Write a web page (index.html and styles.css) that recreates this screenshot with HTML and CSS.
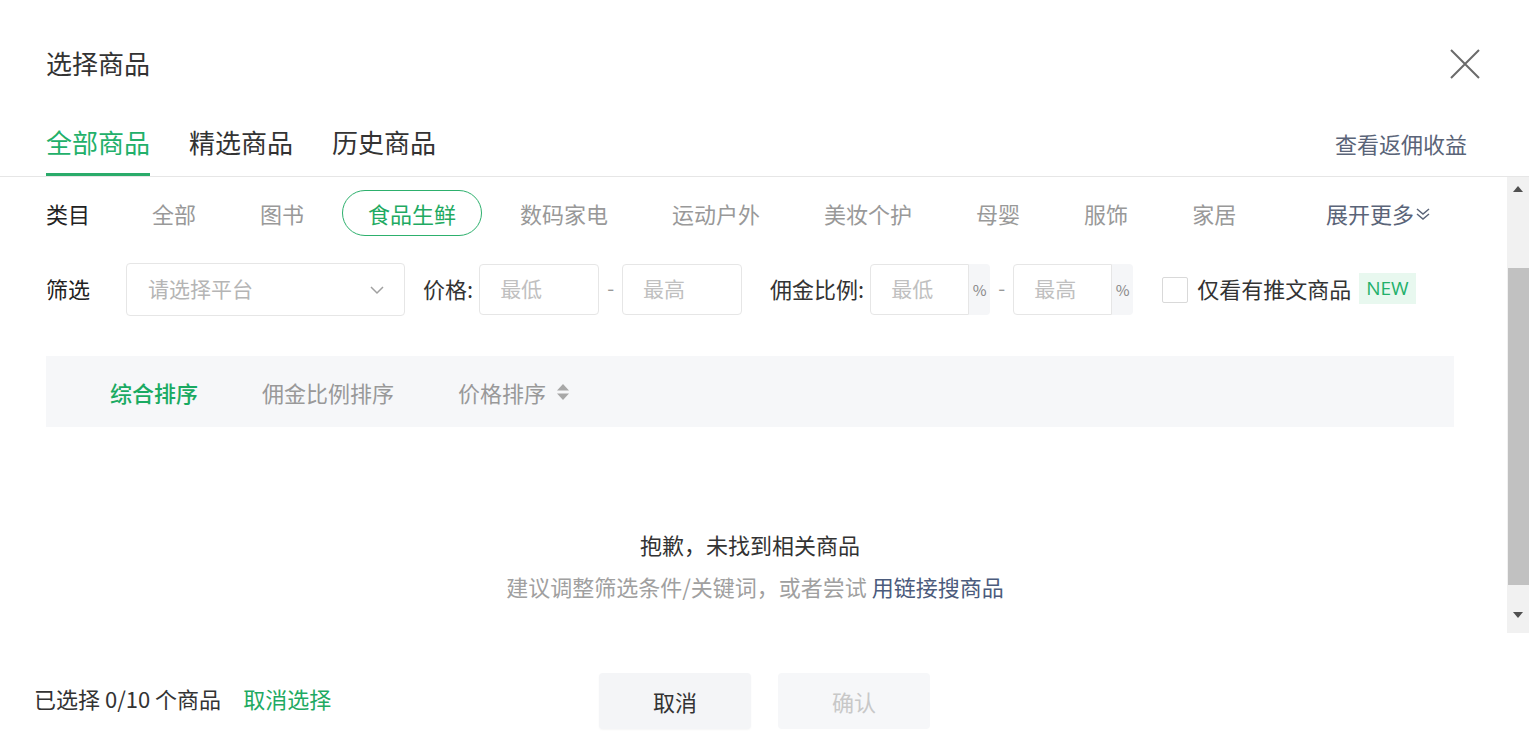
FILE: index.html
```html
<!DOCTYPE html>
<html lang="zh-CN">
<head>
  <meta charset="UTF-8" />
  <meta name="viewport" content="width=device-width, initial-scale=1.0" />
  <title>选择商品</title>
  <link rel="stylesheet" href="styles.css">
</head>
<body>
  <div class="dialog">
    <div class="dialog-header">
      <span class="dialog-title">选择商品</span>
      <button class="close-btn" aria-label="关闭">
        <svg width="30" height="30" viewBox="0 0 30 30">
          <path d="M1 1 L29 29 M29 1 L1 29" stroke="#6b6b6b" stroke-width="2" fill="none" />
        </svg>
      </button>
    </div>

    <div class="tabs">
      <span class="tab active">全部商品</span>
      <span class="tab">精选商品</span>
      <span class="tab">历史商品</span>
      <a class="earnings-link">查看返佣收益</a>
    </div>

    <div class="dialog-body">
      <div class="body-content">
        <div class="category-row">
          <span class="row-label">类目</span>
          <span class="cat-item">全部</span>
          <span class="cat-item">图书</span>
          <span class="cat-item active">食品生鲜</span>
          <span class="cat-item">数码家电</span>
          <span class="cat-item">运动户外</span>
          <span class="cat-item">美妆个护</span>
          <span class="cat-item">母婴</span>
          <span class="cat-item">服饰</span>
          <span class="cat-item">家居</span>
          <span class="expand-more">展开更多
            <svg width="18" height="14" viewBox="0 0 18 14">
              <path d="M3 2 L9 7 L15 2 M3 7 L9 12 L15 7" stroke="#5a6478" stroke-width="1.5" fill="none" />
            </svg>
          </span>
        </div>

        <div class="filter-row">
          <span class="row-label">筛选</span>
          <div class="select-box">
            <span class="placeholder">请选择平台</span>
            <svg width="14" height="10" viewBox="0 0 14 10">
              <path d="M1 2 L7 8 L13 2" stroke="#a0a0a0" stroke-width="1.5" fill="none" />
            </svg>
          </div>

          <span class="field-label price-label">价格:</span>
          <div class="range-input"><span class="placeholder">最低</span></div>
          <span class="dash">-</span>
          <div class="range-input"><span class="placeholder">最高</span></div>

          <span class="field-label rate-label">佣金比例:</span>
          <div class="rate-group">
            <div class="rate-input"><span class="placeholder">最低</span></div>
            <span class="percent">%</span>
          </div>
          <span class="dash">-</span>
          <div class="rate-group">
            <div class="rate-input"><span class="placeholder">最高</span></div>
            <span class="percent">%</span>
          </div>

          <span class="checkbox"></span>
          <span class="check-label">仅看有推文商品</span>
          <span class="badge-new">NEW</span>
        </div>

        <div class="sort-bar">
          <span class="sort-item active">综合排序</span>
          <span class="sort-item">佣金比例排序</span>
          <span class="sort-item">价格排序
            <svg width="14" height="18" viewBox="0 0 14 18">
              <path d="M7 1 L13 7.5 L1 7.5 Z M7 17 L13 10.5 L1 10.5 Z" fill="#a8a8a8" />
            </svg>
          </span>
        </div>

        <div class="empty-state">
          <p class="empty-title">抱歉，未找到相关商品</p>
          <p class="empty-tip">建议调整筛选条件/关键词，或者尝试 <a class="link-search">用链接搜商品</a></p>
        </div>
      </div>

      <div class="scrollbar">
        <span class="scroll-arrow">
          <svg width="12" height="8" viewBox="0 0 12 8"><path d="M6 1 L11 7 L1 7 Z" fill="#505050" /></svg>
        </span>
        <span class="scroll-thumb"></span>
        <span class="scroll-arrow bottom">
          <svg width="12" height="8" viewBox="0 0 12 8"><path d="M1 1 L11 1 L6 7 Z" fill="#505050" /></svg>
        </span>
      </div>
    </div>

    <div class="dialog-footer">
      <div class="selected-info">
        <span>已选择 0/10 个商品</span>
        <a class="clear-select">取消选择</a>
      </div>
      <div class="footer-buttons">
        <button class="btn btn-cancel">取消</button>
        <button class="btn btn-confirm" disabled>确认</button>
      </div>
      <div></div>
    </div>
  </div>
</body>
</html>
```

FILE: styles.css
```css
* {
  box-sizing: border-box;
  margin: 0;
  padding: 0;
  font-family: "Noto Sans CJK SC", "Noto Sans", sans-serif;
}

body {
  background-color: #fff;
  color: #333;
  width: 1529px;
  height: 747px;
  overflow: hidden;
}

.dialog {
  width: 1529px;
  height: 747px;
  display: flex;
  flex-direction: column;
}

.dialog-header {
  display: flex;
  align-items: center;
  justify-content: space-between;
  padding: 36px 49px 0 46px;
  height: 90px;
}

.dialog-title {
  font-size: 26px;
  line-height: 50px;
  color: #333;
}

.close-btn {
  border: none;
  background: none;
  width: 30px;
  height: 30px;
  margin-top: 2px;
  cursor: pointer;
}

.tabs {
  display: flex;
  align-items: flex-end;
  height: 87px;
  padding: 0 62px 0 46px;
  border-bottom: 1px solid #e6e6e6;
}

.tab {
  font-size: 26px;
  line-height: 44px;
  padding-bottom: 9px;
  border-bottom: 3px solid transparent;
  margin-right: 39px;
  color: #333;
}

.tab.active {
  color: #22b06a;
  border-bottom-color: #2aab6a;
}

.earnings-link {
  margin-left: auto;
  font-size: 22px;
  line-height: 44px;
  padding-bottom: 11px;
  color: #5a6478;
}

.dialog-body {
  display: flex;
  height: 456px;
}

.body-content {
  flex: 1;
  padding: 13px 53px 0 46px;
}

.row-label {
  width: 80px;
  flex-shrink: 0;
  font-size: 22px;
  color: #222;
}

.category-row {
  display: flex;
  align-items: center;
  height: 46px;
}

.cat-item {
  font-size: 22px;
  line-height: 44px;
  padding: 0 25px;
  border: 1px solid transparent;
  border-radius: 23px;
  margin-right: 12px;
  color: #999;
}

.cat-item.active {
  border-color: #2db06d;
  color: #1faa62;
}

.expand-more {
  margin-left: auto;
  margin-right: 22px;
  font-size: 22px;
  color: #5a6478;
  display: flex;
  align-items: center;
}

.expand-more svg {
  margin-top: 2px;
}

.filter-row {
  display: flex;
  align-items: center;
  height: 53px;
  margin-top: 27px;
}

.filter-row .row-label,
.field-label,
.check-label,
.placeholder {
  padding-bottom: 4px;
}

.placeholder {
  font-size: 21px;
  color: #c0c0c0;
}

.select-box {
  width: 279px;
  height: 53px;
  border: 1px solid #e6e6e6;
  border-radius: 4px;
  display: flex;
  align-items: center;
  justify-content: space-between;
  padding: 0 20px 0 21px;
}

.select-box .placeholder {
  color: #b5b5b5;
}

.field-label {
  font-size: 22px;
  color: #333;
  margin-right: 6px;
}

.price-label {
  margin-left: 18px;
}

.rate-label {
  margin-left: 28px;
}

.range-input {
  width: 120px;
  height: 51px;
  border: 1px solid #e6e6e6;
  border-radius: 4px;
  display: flex;
  align-items: center;
  padding-left: 20px;
}

.dash {
  color: #999;
  font-size: 20px;
  margin: 0 8px 4px;
}

.rate-group {
  display: flex;
  height: 51px;
}

.rate-input {
  width: 99px;
  height: 51px;
  border: 1px solid #e6e6e6;
  border-radius: 4px 0 0 4px;
  display: flex;
  align-items: center;
  padding-left: 20px;
}

.percent {
  width: 21px;
  background-color: #f5f6f8;
  color: #888;
  font-size: 15px;
  display: flex;
  align-items: center;
  justify-content: center;
  border-radius: 0 4px 4px 0;
}

.checkbox {
  width: 26px;
  height: 26px;
  border: 1px solid #d9d9d9;
  border-radius: 2px;
  margin-left: 29px;
  margin-right: 9px;
}

.check-label {
  font-size: 22px;
  color: #333;
}

.badge-new {
  margin-left: 8px;
  background-color: #e8f8ef;
  color: #22b06a;
  font-family: "Open Sans", "Noto Sans", sans-serif;
  font-size: 19px;
  line-height: 31px;
  padding: 0 7px;
  margin-bottom: 2px;
}

.sort-bar {
  display: flex;
  align-items: center;
  gap: 64px;
  height: 71px;
  margin-top: 40px;
  padding-left: 64px;
  background-color: #f6f7f9;
}

.sort-item {
  font-size: 22px;
  color: #999;
  display: flex;
  align-items: center;
  gap: 10px;
}

.sort-item.active {
  color: #1aaa62;
  font-weight: 500;
}

.empty-state {
  margin-top: 96px;
  text-align: center;
  font-size: 22px;
  line-height: 42px;
}

.empty-title {
  color: #333;
}

.empty-tip {
  color: #a0a0a0;
  padding-left: 10px;
}

.link-search {
  color: #4b5b7c;
}

.scrollbar {
  width: 22px;
  background-color: #f1f1f1;
  display: flex;
  flex-direction: column;
  align-items: center;
}

.scroll-arrow {
  height: 24px;
  display: flex;
  align-items: center;
  justify-content: center;
}

.scroll-arrow.bottom {
  margin-top: auto;
  height: 36px;
}

.scroll-thumb {
  width: 21px;
  margin-left: 1px;
  height: 317px;
  margin-top: 67px;
  background-color: #c1c1c1;
}

.dialog-footer {
  display: grid;
  grid-template-columns: 1fr auto 1fr;
  align-items: center;
  padding-top: 40px;
  height: 114px;
  align-content: start;
}

.selected-info {
  padding-left: 34px;
  font-size: 22px;
  color: #333;
  display: flex;
  gap: 22px;
  margin-top: -6px;
}

.clear-select {
  color: #1faa62;
}

.footer-buttons {
  display: flex;
  gap: 27px;
}

.btn {
  width: 152px;
  height: 56px;
  border: none;
  border-radius: 4px;
  font-size: 22px;
  cursor: pointer;
}

.btn-cancel {
  background-color: #f4f5f7;
  color: #333;
  box-shadow: 0 1px 2px rgba(0, 0, 0, 0.04);
}

.btn-confirm {
  background-color: #f6f7f9;
  color: #c8c8c8;
  cursor: not-allowed;
}
```
